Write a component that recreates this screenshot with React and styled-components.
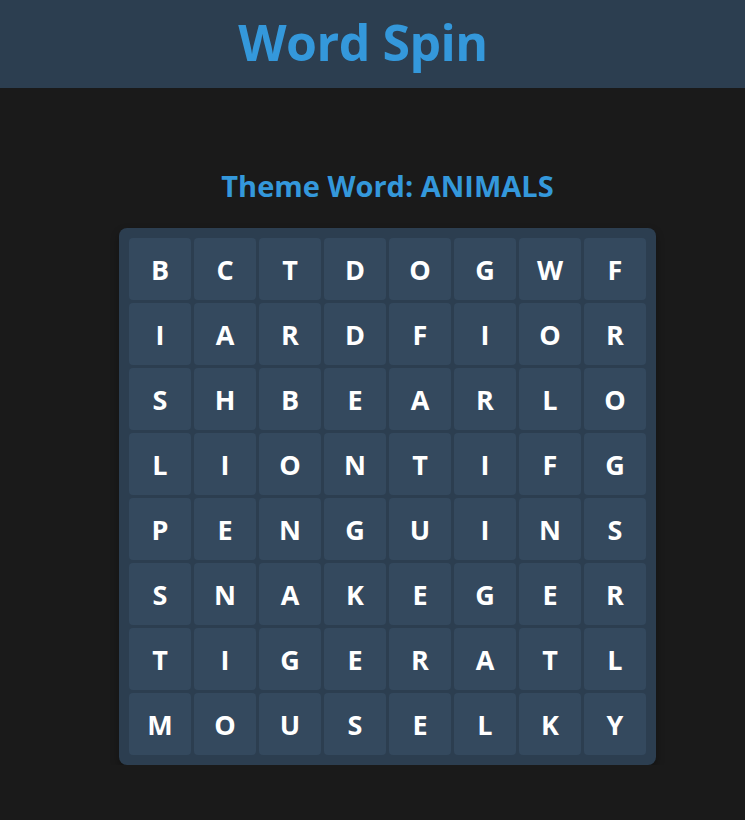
import React from "react";
import styled, { createGlobalStyle } from "styled-components";

const GlobalStyle = createGlobalStyle`
	body {
		margin: 0;
		background: #1a1a1a;
		font-family: "Open Sans", "Noto Sans", sans-serif;
	}
`;

const rows = [
	"BCTDOGWF",
	"IARDFIOR",
	"SHBEARLO",
	"LIONTIFG",
	"PENGUINS",
	"SNAKEGER",
	"TIGERATL",
	"MOUSELKY",
];

const Header = styled.header`
	background: #2c3e50;
	height: 88px;
	box-sizing: border-box;
	display: flex;
	align-items: center;
	justify-content: center;
	padding: 0 19px 5px 0;
`;

const Title = styled.h1`
	margin: 0;
	color: #3498db;
	font-size: 50px;
	font-weight: 700;
	letter-spacing: -0.5px;
`;

const Main = styled.main`
	display: flex;
	flex-direction: column;
	align-items: center;
	padding: 0 0 0 30px;
`;

const Theme = styled.h2`
	margin: 80px 0 24px;
	color: #3498db;
	font-size: 29px;
	font-weight: 700;
	line-height: 36px;
`;

const Grid = styled.div`
	display: grid;
	grid-template-columns: repeat(8, 62px);
	grid-auto-rows: 62px;
	gap: 3px;
	padding: 10px;
	background: #2c3e50;
	border-radius: 8px;
	box-shadow: 0 4px 8px rgba(0, 0, 0, 0.3);
`;

const Cell = styled.div`
	background: #34495e;
	border-radius: 4px;
	display: flex;
	align-items: center;
	justify-content: center;
	color: #ffffff;
	font-size: 27px;
	font-weight: 700;
	user-select: none;
`;

export default function App() {
	return (
		<>
			<GlobalStyle />
			<Header>
				<Title>Word Spin</Title>
			</Header>
			<Main>
				<Theme>Theme Word: ANIMALS</Theme>
				<Grid>
					{rows.map((row, r) =>
						row.split("").map((ch, c) => <Cell key={r + "-" + c}>{ch}</Cell>)
					)}
				</Grid>
			</Main>
		</>
	);
}
